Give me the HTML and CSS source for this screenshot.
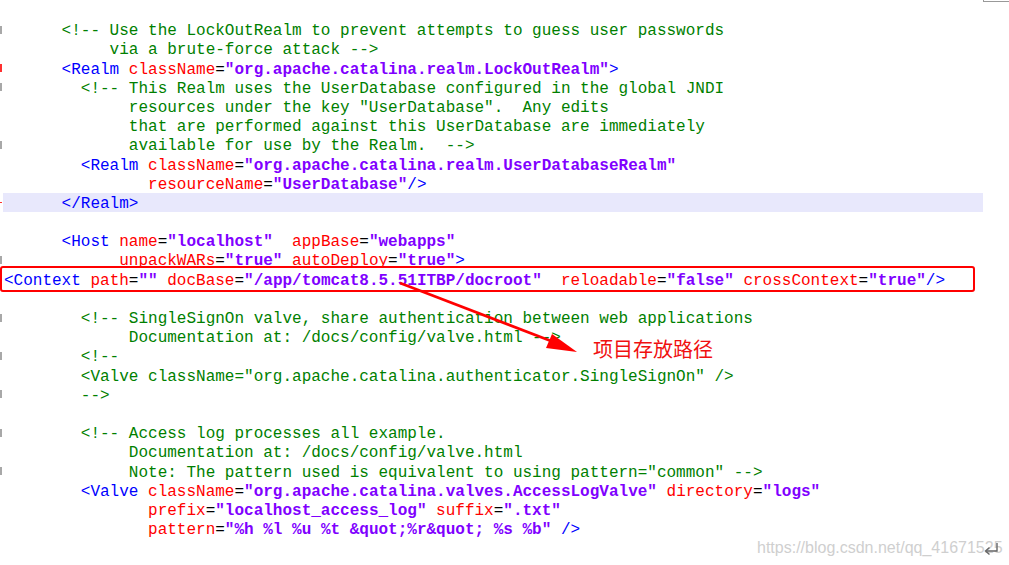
FILE: index.html
```html
<!DOCTYPE html>
<html>
<head>
<meta charset="utf-8">
<link rel="stylesheet" href="styles.css">
</head>
<body>
<div class="page">
  <div class="code">
    <div class="line g"><span class="c">      &lt;!-- Use the LockOutRealm to prevent attempts to guess user passwords</span></div>
    <div class="line"><span class="c">           via a brute-force attack --&gt;</span></div>
    <div class="line r">      <span class="t">&lt;Realm</span> <span class="a">className</span>=<span class="v">"org.apache.catalina.realm.LockOutRealm"</span><span class="t">&gt;</span></div>
    <div class="line g"><span class="c">        &lt;!-- This Realm uses the UserDatabase configured in the global JNDI</span></div>
    <div class="line"><span class="c">             resources under the key "UserDatabase".  Any edits</span></div>
    <div class="line"><span class="c">             that are performed against this UserDatabase are immediately</span></div>
    <div class="line g"><span class="c">             available for use by the Realm.  --&gt;</span></div>
    <div class="line">        <span class="t">&lt;Realm</span> <span class="a">className</span>=<span class="v">"org.apache.catalina.realm.UserDatabaseRealm"</span></div>
    <div class="line">               <span class="a">resourceName</span>=<span class="v">"UserDatabase"</span><span class="t">/&gt;</span></div>
    <div class="line hl">      <span class="t">&lt;/Realm&gt;</span></div>
    <div class="line"> </div>
    <div class="line">      <span class="t">&lt;Host</span> <span class="a">name</span>=<span class="v">"localhost"</span>  <span class="a">appBase</span>=<span class="v">"webapps"</span></div>
    <div class="line g">            <span class="a">unpackWARs</span>=<span class="v">"true"</span> <span class="a">autoDeploy</span>=<span class="v">"true"</span><span class="t">&gt;</span></div>
    <div class="line"><span class="t">&lt;Context</span> <span class="a">path</span>=<span class="v">""</span> <span class="a">docBase</span>=<span class="v">"/app/tomcat8.5.51ITBP/docroot"</span>  <span class="a">reloadable</span>=<span class="v">"false"</span> <span class="a">crossContext</span>=<span class="v">"true"</span><span class="t">/&gt;</span></div>
    <div class="line"> </div>
    <div class="line g"><span class="c">        &lt;!-- SingleSignOn valve, share authentication between web applications</span></div>
    <div class="line"><span class="c">             Documentation at: /docs/config/valve.html --&gt;</span></div>
    <div class="line g"><span class="c">        &lt;!--</span></div>
    <div class="line"><span class="c">        &lt;Valve className="org.apache.catalina.authenticator.SingleSignOn" /&gt;</span></div>
    <div class="line g"><span class="c">        --&gt;</span></div>
    <div class="line"> </div>
    <div class="line g"><span class="c">        &lt;!-- Access log processes all example.</span></div>
    <div class="line"><span class="c">             Documentation at: /docs/config/valve.html</span></div>
    <div class="line g"><span class="c">             Note: The pattern used is equivalent to using pattern="common" --&gt;</span></div>
    <div class="line">        <span class="t">&lt;Valve</span> <span class="a">className</span>=<span class="v">"org.apache.catalina.valves.AccessLogValve"</span> <span class="a">directory</span>=<span class="v">"logs"</span></div>
    <div class="line">               <span class="a">prefix</span>=<span class="v">"localhost_access_log"</span> <span class="a">suffix</span>=<span class="v">".txt"</span></div>
    <div class="line">               <span class="a">pattern</span>=<span class="v">"%h %l %u %t &amp;quot;%r&amp;quot; %s %b"</span> <span class="t">/&gt;</span></div>
  </div>

  <div class="corner"></div>
  <div class="redbox"></div>
  <svg class="arrow" width="1009" height="565" viewBox="0 0 1009 565">
    <line x1="400" y1="283" x2="551" y2="341" stroke="#f00" stroke-width="2.6"/>
    <polygon points="577,352 546,348 552,334" fill="#f00"/>
  </svg>
  <div class="label">项目存放路径</div>
  <div class="watermark">https://blog.csdn.net/qq_41671525</div>
  <svg class="ret" width="16" height="14" viewBox="0 0 16 14">
    <path d="M14 1 V9 H3" fill="none" stroke="#666" stroke-width="1.4"/>
    <path d="M6.5 5.5 L2.5 9 L6.5 12.5" fill="none" stroke="#666" stroke-width="1.4"/>
  </svg>
</div>
</body>
</html>
```

FILE: styles.css
```css
html, body {
  margin: 0;
  padding: 0;
  background: #fff;
  overflow: hidden;
}
.page {
  position: relative;
  width: 1009px;
  height: 565px;
  overflow: hidden;
}
.code {
  padding-top: 20.2px;
  font-family: "Liberation Mono", "Courier New", monospace;
  font-size: 16px;
  color: #000;
}
.line {
  height: 15.2px;
  padding-top: 4px;
  line-height: 15.2px;
  padding-left: 4px;
  width: 979px;
  white-space: pre;
}
.c { color: #008000; }
.t { color: #0000ff; }
.a { color: #ff0000; }
.v { color: #8000ff; font-weight: bold; }
.g {
  background: linear-gradient(#a8a8a8, #a8a8a8) 0 50% / 2px 8px no-repeat;
}
.r {
  background: linear-gradient(#ff3030, #ff3030) 0 50% / 2px 8px no-repeat;
}
.hl {
  background:
    linear-gradient(#ff3030, #ff3030) 0 50% / 2px 1px no-repeat,
    linear-gradient(to right, transparent 3px, #e8e8fc 3px);
}
.corner {
  position: absolute;
  top: -2px;
  left: 983px;
  width: 30px;
  height: 3px;
  border-left: 1px solid #999;
  border-bottom: 1px solid #999;
}
.redbox {
  position: absolute;
  left: 0;
  top: 266px;
  width: 971px;
  height: 22px;
  border: 2px solid #ff0000;
  border-radius: 3px;
}
.arrow {
  position: absolute;
  left: 0;
  top: 0;
}
.label {
  position: absolute;
  left: 593px;
  top: 335px;
  font-family: "Noto Sans CJK SC", sans-serif;
  font-size: 20px;
  line-height: 28px;
  color: #f01010;
}
.watermark {
  position: absolute;
  left: 757px;
  top: 538px;
  font-family: "Liberation Sans", Arial, sans-serif;
  font-size: 16px;
  line-height: 20px;
  color: #cfcfcf;
}
.ret {
  position: absolute;
  left: 983px;
  top: 542px;
}
```
